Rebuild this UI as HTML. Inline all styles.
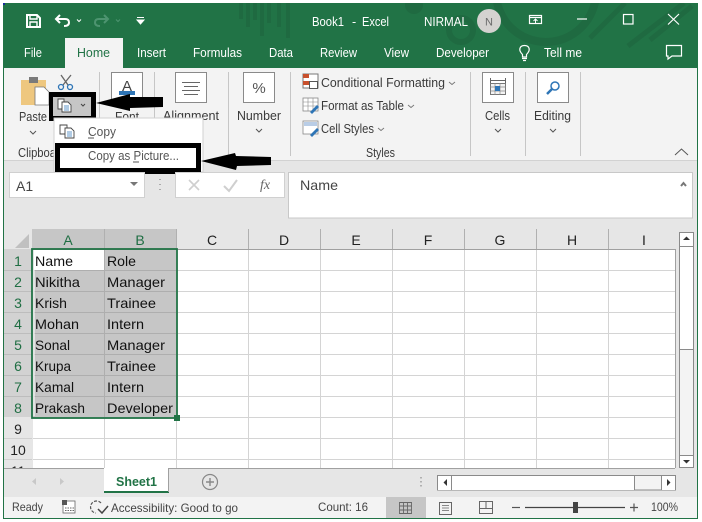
<!DOCTYPE html>
<html><head><meta charset="utf-8"><style>
html,body{margin:0;padding:0;background:#fff;width:702px;height:522px;overflow:hidden}
svg{display:block}
text{font-family:"Liberation Sans",sans-serif;font-size:12.5px;fill:#3a3a3a}
.w{fill:#fff}
.c{font-size:14px;fill:#111}
.h{font-size:14px;fill:#222;text-anchor:middle}
.g{fill:#1f6e43}
</style></head><body>
<svg width="702" height="522" viewBox="0 0 702 522" xmlns="http://www.w3.org/2000/svg">
<defs><clipPath id="tb"><rect x="3" y="3" width="695" height="65"/></clipPath></defs>
<rect x="3" y="3" width="695" height="516" fill="#217346"/>
<rect x="3" y="3" width="2" height="2" fill="#1a2a9a"/>
<!-- title pattern -->
<g clip-path="url(#tb)">
<g fill="#1f6a41">
<rect x="239" y="3" width="4" height="16"/><rect x="246" y="3" width="4" height="24"/><rect x="253" y="3" width="4" height="17"/><rect x="260" y="3" width="4" height="33"/><rect x="267" y="3" width="4" height="20"/><rect x="277" y="3" width="4" height="24"/><rect x="286" y="3" width="4" height="35"/>
<circle cx="414" cy="5" r="9"/>
</g>
<g fill="none" stroke="#1f6a41">
<circle cx="461" cy="30" r="12" stroke-width="6"/>
<circle cx="546" cy="-8" r="50" stroke-width="8"/>
<path d="M628 46L684 3M650 40L692 6M590 38L625 3" stroke-width="5"/>
</g>
</g>
<!-- ribbon -->
<rect x="4" y="68" width="693" height="92" fill="#f3f3f3"/>
<rect x="4" y="160" width="693" height="1" fill="#d2d2d2"/>
<rect x="4" y="161" width="693" height="68" fill="#e6e6e6"/>
<rect x="65" y="38" width="58" height="30" fill="#f3f3f3"/>
<!-- QAT -->
<g fill="none" stroke="#fff" stroke-width="2">
<path d="M27 15H37L40 18V27H27Z"/><path d="M30 15V19H37V15M30 27V22H37V27" stroke-width="1.400"/>
<path d="M56 19H65Q69 19 69 22.500Q69 26 64 26"/><path d="M60 15L56 19L60 23"/>
<path d="M77 19.500l2 2l2-2" stroke-width="1"/>
</g>
<g fill="none" stroke="#4d9470" stroke-width="2"><path d="M108 19H99Q95 19 95 22.500Q95 26 100 26"/><path d="M104 15L108 19L104 23"/><path d="M116 19.500l2 2l2-2" stroke-width="1"/></g>
<path d="M137 17.500H144M137 20H144L140.500 24Z" stroke="#fff" fill="#fff"/>
<text x="312" y="26" class="w" textLength="32" lengthAdjust="spacingAndGlyphs">Book1</text>
<text x="352" y="26" class="w">-</text>
<text x="362" y="26" class="w" textLength="27" lengthAdjust="spacingAndGlyphs">Excel</text>
<text x="424" y="26" class="w" textLength="44" lengthAdjust="spacingAndGlyphs">NIRMAL</text>
<circle cx="489" cy="21" r="12" fill="#d4d2d0"/>
<text x="489" y="25.500" text-anchor="middle" style="font-size:11px;fill:#6a6a6a">N</text>
<g fill="none" stroke="#fff" stroke-width="1.200">
<rect x="529.500" y="15.500" width="12" height="8"/><path d="M529 17.500H542" stroke-width="1.200"/><path d="M535.500 23V19.500M533.500 21l2-2l2 2" stroke-width="1"/>
<path d="M577 19H587"/>
<rect x="623.500" y="14.500" width="9.500" height="9.500"/>
<path d="M668 14L679 24.500M679 14L668 24.500"/>
<path d="M666.500 45.500H681.500V56H672L668 59V56H666.500Z"/>
<path d="M522.500 54.500C518 50 519.500 45.500 524.500 45.500C529.500 45.500 531 50 526.500 54.500V57H522.500Z"/><path d="M522 58.500H527M523 60.500H526"/>
</g>
<text x="24" y="57" class="w" textLength="18" lengthAdjust="spacingAndGlyphs">File</text>
<text x="77" y="57" style="fill:#217346" textLength="33" lengthAdjust="spacingAndGlyphs">Home</text>
<text x="137" y="57" class="w" textLength="29" lengthAdjust="spacingAndGlyphs">Insert</text>
<text x="193" y="57" class="w" textLength="49" lengthAdjust="spacingAndGlyphs">Formulas</text>
<text x="269" y="57" class="w" textLength="24" lengthAdjust="spacingAndGlyphs">Data</text>
<text x="320" y="57" class="w" textLength="37" lengthAdjust="spacingAndGlyphs">Review</text>
<text x="384" y="57" class="w" textLength="25" lengthAdjust="spacingAndGlyphs">View</text>
<text x="436" y="57" class="w" textLength="53" lengthAdjust="spacingAndGlyphs">Developer</text>
<text x="544" y="57" class="w" textLength="38" lengthAdjust="spacingAndGlyphs">Tell me</text>
<!-- ribbon separators -->
<g fill="#c6c6c6"><rect x="99" y="72" width="1" height="84"/><rect x="154" y="72" width="1" height="84"/><rect x="228" y="72" width="1" height="84"/><rect x="290" y="72" width="1" height="84"/><rect x="470" y="72" width="1" height="84"/><rect x="525" y="72" width="1" height="84"/><rect x="580" y="72" width="1" height="84"/></g>
<!-- Paste -->
<path d="M21 80H46V105H21Z" fill="#eec77f"/>
<rect x="29" y="77" width="9" height="6" fill="#7a7a7a"/>
<path d="M35 87H44L49 92V105H35Z" fill="#fff" stroke="#777" stroke-width=".8"/>
<text x="19" y="121" textLength="28" lengthAdjust="spacingAndGlyphs">Paste</text>
<path d="M30 131l3 3l3-3" fill="none" stroke="#555"/>
<text x="18" y="157" textLength="38" lengthAdjust="spacingAndGlyphs">Clipboa</text>
<!-- Scissors -->
<g fill="none" stroke="#666" stroke-width="1.300"><path d="M61 75L68 85M71 75L63 85"/></g>
<g fill="none" stroke="#2e75b6" stroke-width="1.300"><circle cx="61" cy="87" r="2.500"/><circle cx="70" cy="87" r="2.500"/></g>
<!-- Font, Alignment, Number -->
<rect x="111.500" y="72.500" width="31" height="30" fill="#fff" stroke="#8a8a8a"/>
<text x="127" y="91" text-anchor="middle" style="font-size:15px;fill:#444">A</text>
<rect x="119" y="91" width="16" height="4" fill="#2e75b6"/>
<text x="115" y="121" textLength="24" lengthAdjust="spacingAndGlyphs">Font</text>
<rect x="175.500" y="72.500" width="31" height="30" fill="#fff" stroke="#8a8a8a"/>
<path d="M182 82.500H200M184 86.500H198M182 90.500H200M184 94.500H198" stroke="#666"/>
<text x="163" y="120" textLength="56" lengthAdjust="spacingAndGlyphs">Alignment</text>
<rect x="243.500" y="72.500" width="31" height="30" fill="#fff" stroke="#8a8a8a"/>
<text x="259" y="93" text-anchor="middle" style="font-size:15px;fill:#555">%</text>
<text x="237" y="120" textLength="44" lengthAdjust="spacingAndGlyphs">Number</text>
<path d="M256 129l3 3l3-3" fill="none" stroke="#555"/>
<!-- Styles -->
<rect x="303" y="74" width="15" height="14" fill="#fff" stroke="#777"/>
<rect x="303" y="74" width="6" height="4" fill="#c8502d"/><rect x="303" y="81" width="6" height="4" fill="#c8502d"/>
<rect x="309.500" y="81.500" width="8" height="7" fill="#fff" stroke="#555"/>
<g fill="#fff" stroke="#888" stroke-width=".8"><rect x="303" y="98" width="15" height="13"/><rect x="303" y="121" width="15" height="13"/></g>
<path d="M303 102H318M303 106H318M308 98V111M313 98V111" stroke="#888" stroke-width=".6"/>
<rect x="304" y="122" width="13" height="4" fill="#b9cde6"/>
<path d="M310 112L317 105L319 107L312 114Z" fill="#2e75b6"/><path d="M310 135L317 128L319 130L312 137Z" fill="#2e75b6"/>
<text x="321" y="87" textLength="124" lengthAdjust="spacingAndGlyphs">Conditional Formatting</text>
<path d="M449 82l3 2.500l3-2.500" fill="none" stroke="#777" stroke-width=".9"/>
<text x="321" y="110" textLength="83" lengthAdjust="spacingAndGlyphs">Format as Table</text>
<path d="M408 105l3 2.500l3-2.500" fill="none" stroke="#777" stroke-width=".9"/>
<text x="321" y="133" textLength="53" lengthAdjust="spacingAndGlyphs">Cell Styles</text>
<path d="M378 128l3 2.500l3-2.500" fill="none" stroke="#777" stroke-width=".9"/>
<text x="366" y="157" textLength="29" lengthAdjust="spacingAndGlyphs">Styles</text>
<!-- Cells -->
<rect x="482.500" y="72.500" width="31" height="30" fill="#fff" stroke="#8a8a8a"/>
<path d="M491 80.500H505M490.500 78V83M505.500 78V83" stroke="#666" fill="none"/>
<rect x="490.500" y="83.500" width="15" height="11" fill="#f3f3f3" stroke="#777"/>
<path d="M490 87H506M490 91H506M495 83V95M500 83V95" stroke="#888" stroke-width=".7"/>
<rect x="495" y="86" width="5" height="5" fill="#2e75b6"/>
<text x="485" y="120" textLength="25" lengthAdjust="spacingAndGlyphs">Cells</text>
<path d="M495 129l3 3l3-3" fill="none" stroke="#555"/>
<!-- Editing -->
<rect x="537.500" y="72.500" width="31" height="30" fill="#fff" stroke="#8a8a8a"/>
<circle cx="555" cy="86" r="4" fill="none" stroke="#2e75b6" stroke-width="1.500"/>
<path d="M552 89L547 94" stroke="#2e75b6" stroke-width="2.500"/>
<text x="534" y="120" textLength="37" lengthAdjust="spacingAndGlyphs">Editing</text>
<path d="M550 129l3 3l3-3" fill="none" stroke="#555"/>
<path d="M675 155l6.500-6l6.500 6" fill="none" stroke="#555"/>
<!-- Copy button -->
<rect x="49" y="92" width="47" height="29" fill="#000"/>
<rect x="53" y="97" width="38" height="19" fill="#c6c6c6"/>
<g fill="#fff" stroke="#444" stroke-width=".9"><path d="M58 99H64V109H58Z"/><path d="M62 102H68L71 105V112H62Z"/></g>
<path d="M64 106H69M64 108H69M64 110H69" stroke="#2e75b6" stroke-width=".7"/>
<path d="M81 104l2 2l2-2" fill="none" stroke="#444"/>
<!-- Arrow 1 -->
<path d="M96 103L130 94V97L163 97V107L130 108V111Z" fill="#000"/>
<!-- Menu -->
<rect x="54" y="118" width="149" height="54" fill="#fff" stroke="#d0d0d0"/>
<g fill="#fff" stroke="#444" stroke-width=".9"><path d="M60 125H67V134H60Z"/><path d="M65 128H71L74 131V138H65Z"/></g>
<path d="M67 132H72M67 134H72M67 136H72" stroke="#2e75b6" stroke-width=".7"/>
<text x="88" y="136" style="fill:#555" textLength="28" lengthAdjust="spacingAndGlyphs">Copy</text>
<path d="M88 138H94" stroke="#555"/>
<rect x="55" y="143" width="146" height="31" fill="#000"/>
<rect x="60" y="148" width="136" height="20" fill="#fff"/>
<text x="88" y="160" style="fill:#555" textLength="91" lengthAdjust="spacingAndGlyphs">Copy as Picture...</text>
<path d="M133 162H139" stroke="#555"/>
<!-- Arrow 2 -->
<path d="M201 161L235 153L236 156L271 157V165L237 166L236 170Z" fill="#000"/>
<!-- Formula bar -->
<rect x="9.500" y="172.500" width="135" height="25" fill="#fff" stroke="#d0d0d0"/>
<text x="16" y="191" style="font-size:14px;fill:#444">A1</text>
<path d="M130 182H138L134 186Z" fill="#777"/>
<path d="M160 179v1M160 184v1M160 189v1" stroke="#aaa" stroke-width="2"/>
<rect x="175.500" y="172.500" width="109" height="25" fill="#fff" stroke="#d0d0d0"/>
<path d="M189 180L199 190M199 180L189 190" stroke="#cfcfcf" stroke-width="1.600"/>
<path d="M224 186L229 191L237 180" fill="none" stroke="#cfcfcf" stroke-width="2"/>
<text x="260" y="189" style="font-family:'Liberation Serif',serif;font-style:italic;font-size:14px;fill:#666">fx</text>
<rect x="288.500" y="172.500" width="404" height="45.500" fill="#fff" stroke="#c8c8c8"/>
<text x="300" y="190" style="font-size:14px;fill:#444" textLength="38" lengthAdjust="spacingAndGlyphs">Name</text>
<path d="M681 186L683.500 183L686 186" fill="none" stroke="#777" stroke-width="2"/>
<!-- Grid -->
<rect x="4" y="229" width="693" height="239" fill="#e6e6e6"/>
<rect x="33" y="250" width="643" height="218" fill="#fff"/>
<path d="M29 234V248H15Z" fill="#c0c0c0"/>
<rect x="32" y="229" width="144" height="20" fill="#c6c6c6"/>
<rect x="4" y="249" width="28" height="168" fill="#d2d2d2"/>
<g fill="#bdbdbd"><rect x="4" y="270" width="28" height="1"/><rect x="4" y="291" width="28" height="1"/><rect x="4" y="312" width="28" height="1"/><rect x="4" y="333" width="28" height="1"/><rect x="4" y="354" width="28" height="1"/><rect x="4" y="375" width="28" height="1"/><rect x="4" y="396" width="28" height="1"/></g>
<g fill="#d0d0d0"><rect x="4" y="438" width="28" height="1"/><rect x="4" y="459" width="28" height="1"/></g>
<rect x="33" y="249" width="643" height="1" fill="#a0a0a0"/>
<g fill="#d4d4d4">
<rect x="33" y="270" width="643" height="1"/><rect x="33" y="291" width="643" height="1"/><rect x="33" y="312" width="643" height="1"/><rect x="33" y="333" width="643" height="1"/><rect x="33" y="354" width="643" height="1"/><rect x="33" y="375" width="643" height="1"/><rect x="33" y="396" width="643" height="1"/><rect x="33" y="417" width="643" height="1"/><rect x="33" y="438" width="643" height="1"/><rect x="33" y="459" width="643" height="1"/>
<rect x="104" y="250" width="1" height="218"/><rect x="176" y="250" width="1" height="218"/><rect x="248" y="250" width="1" height="218"/><rect x="320" y="250" width="1" height="218"/><rect x="392" y="250" width="1" height="218"/><rect x="464" y="250" width="1" height="218"/><rect x="536" y="250" width="1" height="218"/><rect x="608" y="250" width="1" height="218"/>
</g>
<rect x="675" y="249" width="1" height="219" fill="#a0a0a0"/>
<!-- Column header ticks -->
<g fill="#b0b0b0"><rect x="104" y="229" width="1" height="20"/><rect x="176" y="229" width="1" height="20"/><rect x="248" y="229" width="1" height="20"/><rect x="320" y="229" width="1" height="20"/><rect x="392" y="229" width="1" height="20"/><rect x="464" y="229" width="1" height="20"/><rect x="536" y="229" width="1" height="20"/><rect x="608" y="229" width="1" height="20"/></g>
<text x="68" y="245" class="h" style="fill:#1f6e43">A</text><text x="140" y="245" class="h" style="fill:#1f6e43">B</text><text x="212" y="245" class="h">C</text><text x="284" y="245" class="h">D</text><text x="356" y="245" class="h">E</text><text x="428" y="245" class="h">F</text><text x="500" y="245" class="h">G</text><text x="572" y="245" class="h">H</text><text x="644" y="245" class="h">I</text>
<!-- Selection -->
<rect x="33" y="250" width="143" height="167" fill="#c6c6c6"/>
<rect x="34" y="250" width="70" height="20" fill="#fff"/>
<g fill="#aeaeae"><rect x="34" y="270" width="142" height="1"/><rect x="34" y="291" width="142" height="1"/><rect x="34" y="312" width="142" height="1"/><rect x="34" y="333" width="142" height="1"/><rect x="34" y="354" width="142" height="1"/><rect x="34" y="375" width="142" height="1"/><rect x="34" y="396" width="142" height="1"/><rect x="104" y="250" width="1" height="167"/></g>
<rect x="32" y="249" width="145" height="169" fill="none" stroke="#217346" stroke-width="1.800"/>
<rect x="33.500" y="250" width="1" height="166" fill="#fff"/>
<rect x="174" y="415" width="6" height="6" fill="#217346"/>
<!-- Row numbers -->
<text x="18" y="266" class="h" style="fill:#1f6e43">1</text><text x="18" y="287" class="h" style="fill:#1f6e43">2</text><text x="18" y="308" class="h" style="fill:#1f6e43">3</text><text x="18" y="329" class="h" style="fill:#1f6e43">4</text><text x="18" y="350" class="h" style="fill:#1f6e43">5</text><text x="18" y="371" class="h" style="fill:#1f6e43">6</text><text x="18" y="392" class="h" style="fill:#1f6e43">7</text><text x="18" y="413" class="h" style="fill:#1f6e43">8</text><text x="18" y="434" class="h">9</text><text x="18" y="455" class="h">10</text><text x="18" y="476" class="h">11</text>
<!-- Cells -->
<text x="35" y="266" class="c" textLength="38" lengthAdjust="spacingAndGlyphs">Name</text><text x="107" y="266" class="c" textLength="29" lengthAdjust="spacingAndGlyphs">Role</text>
<text x="35" y="287" class="c" textLength="45" lengthAdjust="spacingAndGlyphs">Nikitha</text><text x="107" y="287" class="c" textLength="58" lengthAdjust="spacingAndGlyphs">Manager</text>
<text x="35" y="308" class="c" textLength="32" lengthAdjust="spacingAndGlyphs">Krish</text><text x="107" y="308" class="c" textLength="49" lengthAdjust="spacingAndGlyphs">Trainee</text>
<text x="35" y="329" class="c" textLength="44" lengthAdjust="spacingAndGlyphs">Mohan</text><text x="107" y="329" class="c" textLength="37" lengthAdjust="spacingAndGlyphs">Intern</text>
<text x="35" y="350" class="c" textLength="35" lengthAdjust="spacingAndGlyphs">Sonal</text><text x="107" y="350" class="c" textLength="58" lengthAdjust="spacingAndGlyphs">Manager</text>
<text x="35" y="371" class="c" textLength="36" lengthAdjust="spacingAndGlyphs">Krupa</text><text x="107" y="371" class="c" textLength="49" lengthAdjust="spacingAndGlyphs">Trainee</text>
<text x="35" y="392" class="c" textLength="39" lengthAdjust="spacingAndGlyphs">Kamal</text><text x="107" y="392" class="c" textLength="37" lengthAdjust="spacingAndGlyphs">Intern</text>
<text x="35" y="413" class="c" textLength="50" lengthAdjust="spacingAndGlyphs">Prakash</text><text x="107" y="413" class="c" textLength="66" lengthAdjust="spacingAndGlyphs">Developer</text>
<!-- Vertical scrollbar -->
<rect x="679.500" y="232.500" width="14" height="235" fill="#f3f3f3" stroke="#8a8a8a"/>
<rect x="680" y="233" width="13" height="13" fill="#fff"/>
<path d="M683 240H690L686.500 236.500Z" fill="#333"/>
<rect x="680" y="247" width="13" height="102" fill="#fff"/>
<rect x="679" y="246" width="15" height="1" fill="#8a8a8a"/><rect x="679" y="349" width="15" height="1" fill="#8a8a8a"/>
<rect x="680" y="456" width="13" height="11" fill="#fff"/><rect x="679" y="455" width="15" height="1" fill="#8a8a8a"/>
<path d="M683 460H690L686.500 463.500Z" fill="#333"/>
<!-- Tab bar -->
<rect x="4" y="468" width="693" height="29" fill="#e6e6e6"/>
<rect x="4" y="468" width="671" height="1" fill="#a0a0a0"/>
<rect x="104" y="468" width="65" height="24" fill="#fff"/>
<rect x="104" y="491" width="65" height="2" fill="#217346"/>
<rect x="168" y="468" width="1" height="24" fill="#a0a0a0"/>
<path d="M36 478V485L32 481.500Z" fill="#c8c8c8"/><path d="M60 478V485L64 481.500Z" fill="#c8c8c8"/>
<text x="116" y="486" style="font-weight:bold;fill:#217346;font-size:12.5px" textLength="41" lengthAdjust="spacingAndGlyphs">Sheet1</text>
<circle cx="210" cy="482" r="7.500" fill="none" stroke="#888" stroke-width="1.200"/>
<path d="M206 482H214M210 478V486" stroke="#888" stroke-width="1.400"/>
<path d="M421 477v1.500M421 481v1.500M421 485v1.500" stroke="#b0b0b0" stroke-width="2"/>
<rect x="437.500" y="475.500" width="238" height="14.500" fill="#f3f3f3" stroke="#8a8a8a"/>
<rect x="438" y="476" width="13" height="14" fill="#fff"/>
<rect x="452" y="476" width="182" height="14" fill="#fff"/>
<rect x="451" y="475" width="1" height="15" fill="#8a8a8a"/><rect x="634" y="475" width="1" height="15" fill="#8a8a8a"/>
<rect x="662" y="476" width="13" height="14" fill="#fff"/><rect x="661" y="475" width="1" height="15" fill="#8a8a8a"/>
<path d="M447 479V486L443.500 482.500Z" fill="#333"/><path d="M667 479V486L670.500 482.500Z" fill="#333"/>
<!-- Status bar -->
<rect x="4" y="497" width="693" height="21" fill="#f3f3f3"/>
<text x="12" y="511" style="font-size:12px;fill:#444" textLength="31" lengthAdjust="spacingAndGlyphs">Ready</text>
<rect x="63" y="501" width="12" height="12" fill="#fff" stroke="#666" stroke-width=".8"/><rect x="62" y="500" width="5" height="5" fill="#555"/>
<path d="M65 508H74M65 510.500H74" stroke="#666" stroke-dasharray="1.500 1"/>
<path d="M101 503A6 6 0 1 0 96 513" fill="none" stroke="#555" stroke-width="1.200" stroke-dasharray="3 1.500"/>
<path d="M98 509L102 513L108 506" fill="none" stroke="#444" stroke-width="1.500"/>
<text x="111" y="512" style="font-size:12px;fill:#444" textLength="127" lengthAdjust="spacingAndGlyphs">Accessibility: Good to go</text>
<text x="318" y="511" style="font-size:12px;fill:#444" textLength="50" lengthAdjust="spacingAndGlyphs">Count: 16</text>
<rect x="386" y="497" width="40" height="21" fill="#c6c6c6"/>
<path d="M399.500 502.500H411.500V513.500H399.500ZM399.500 506H411.500M399.500 510H411.500M403.500 502.500V513.500M407.500 502.500V513.500" fill="none" stroke="#666" stroke-width=".9"/>
<rect x="439.500" y="502.500" width="12" height="12" fill="none" stroke="#666"/>
<path d="M442 505.500H449M442 508H449M442 510.500H449" stroke="#666" stroke-width=".8"/>
<path d="M479.500 501.500H492.500V513.500H479.500ZM479.500 508.500H492.500M486 501.500V508.500" fill="none" stroke="#666"/>
<path d="M512 507.500H520" stroke="#555" stroke-width="1.200"/>
<path d="M525 507.500H625" stroke="#444" stroke-width="1.200"/>
<rect x="573" y="502" width="5" height="11" fill="#444"/>
<path d="M630 507.500H638M634 503.500V511.500" stroke="#555" stroke-width="1.200"/>
<text x="651" y="511" style="font-size:12px;fill:#444" textLength="27" lengthAdjust="spacingAndGlyphs">100%</text>
</svg>
</body></html>
